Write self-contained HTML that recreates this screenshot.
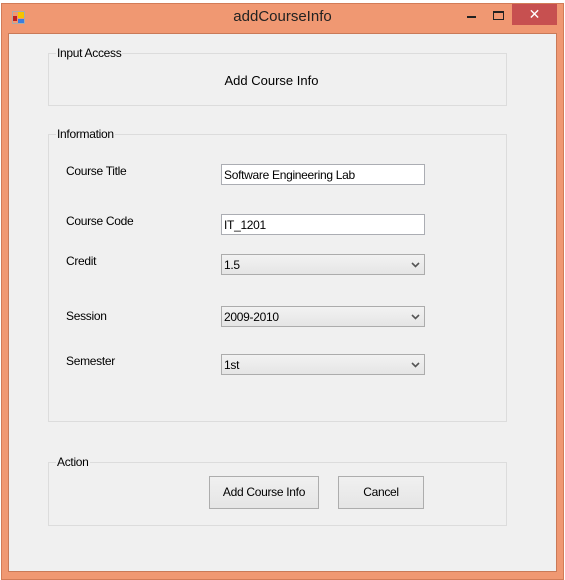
<!DOCTYPE html>
<html><head><meta charset="utf-8"><style>
*{margin:0;padding:0;box-sizing:border-box}
body{width:565px;height:580px;background:#fff;position:relative;overflow:hidden;font-family:"Liberation Sans",Tahoma,sans-serif;font-size:12px;color:#000}
.win{position:absolute;left:1px;top:3px;width:563px;height:577px;background:#F09872;border:1px solid #d27c58}
.client{position:absolute;left:8px;top:33px;width:549px;height:539px;background:#f0f0f0;border:1px solid #c97a58}
.title{position:absolute;left:0;top:8px;width:565px;text-align:center;font-size:15px;color:#222}
.close{position:absolute;left:512px;top:4px;width:45px;height:21px;background:#c75050;color:#fff;text-align:center;font-size:14px;line-height:21px}
.min{position:absolute;left:467px;top:16px;width:9px;height:2px;background:#222}
.max{position:absolute;left:493px;top:11px;width:11px;height:9px;border:1px solid #222;border-top-width:2px}
.grp{position:absolute;border:1px solid #dcdcdc}
.grp span{position:absolute;left:7px;top:-8px;background:#f0f0f0;padding:0 1px;font-size:12px;letter-spacing:-0.3px}
.lbl{position:absolute;left:66px;font-size:12px;letter-spacing:-0.3px}
.tb{position:absolute;left:221px;width:204px;height:21px;background:#fff;border:1px solid #abadb3;padding:3px 2px;font-size:12px;letter-spacing:-0.3px}
.cb{position:absolute;left:221px;width:204px;height:21px;background:linear-gradient(#f2f2f2,#e5e5e5);border:1px solid #acacac;padding:3px 2px;font-size:12px;letter-spacing:-0.3px}
.cb svg{position:absolute;right:4px;top:7px}
.btn{position:absolute;top:476px;height:33px;background:linear-gradient(#f0f0f0,#e5e5e5);border:1px solid #adadad;text-align:center;line-height:31px;font-size:12px;letter-spacing:-0.3px}
</style></head><body>
<div class="win"></div>
<div style="position:absolute;left:12px;top:11px;width:13px;height:13px;border:1px solid #aaa"></div>
<div style="position:absolute;left:13px;top:16px;width:4px;height:5px;background:#c02020"></div>
<div style="position:absolute;left:18px;top:12px;width:6px;height:6px;background:#f5c400"></div>
<div style="position:absolute;left:18px;top:19px;width:6px;height:4px;background:#3a7ee0"></div>
<div class="title">addCourseInfo</div>
<div class="min"></div><div class="max"></div>
<div class="close">✕</div>
<div class="client"></div>
<div class="grp" style="left:48px;top:53px;width:459px;height:53px"><span>Input Access</span></div>
<div style="position:absolute;left:0;width:543px;top:73px;text-align:center;font-size:13px">Add Course Info</div>
<div class="grp" style="left:48px;top:134px;width:459px;height:288px"><span>Information</span></div>
<div class="lbl" style="top:164px">Course Title</div>
<div class="tb" style="top:164px">Software Engineering Lab</div>
<div class="lbl" style="top:214px">Course Code</div>
<div class="tb" style="top:214px">IT_1201</div>
<div class="lbl" style="top:254px">Credit</div>
<div class="cb" style="top:254px">1.5<svg width="9" height="6"><path d="M1 1 L4.5 4.5 L8 1" stroke="#555" stroke-width="1.6" fill="none"/></svg></div>
<div class="lbl" style="top:309px">Session</div>
<div class="cb" style="top:306px">2009-2010<svg width="9" height="6"><path d="M1 1 L4.5 4.5 L8 1" stroke="#555" stroke-width="1.6" fill="none"/></svg></div>
<div class="lbl" style="top:354px">Semester</div>
<div class="cb" style="top:354px">1st<svg width="9" height="6"><path d="M1 1 L4.5 4.5 L8 1" stroke="#555" stroke-width="1.6" fill="none"/></svg></div>
<div class="grp" style="left:48px;top:462px;width:459px;height:64px"><span>Action</span></div>
<div class="btn" style="left:209px;width:110px">Add Course Info</div>
<div class="btn" style="left:338px;width:86px">Cancel</div>
</body></html>
